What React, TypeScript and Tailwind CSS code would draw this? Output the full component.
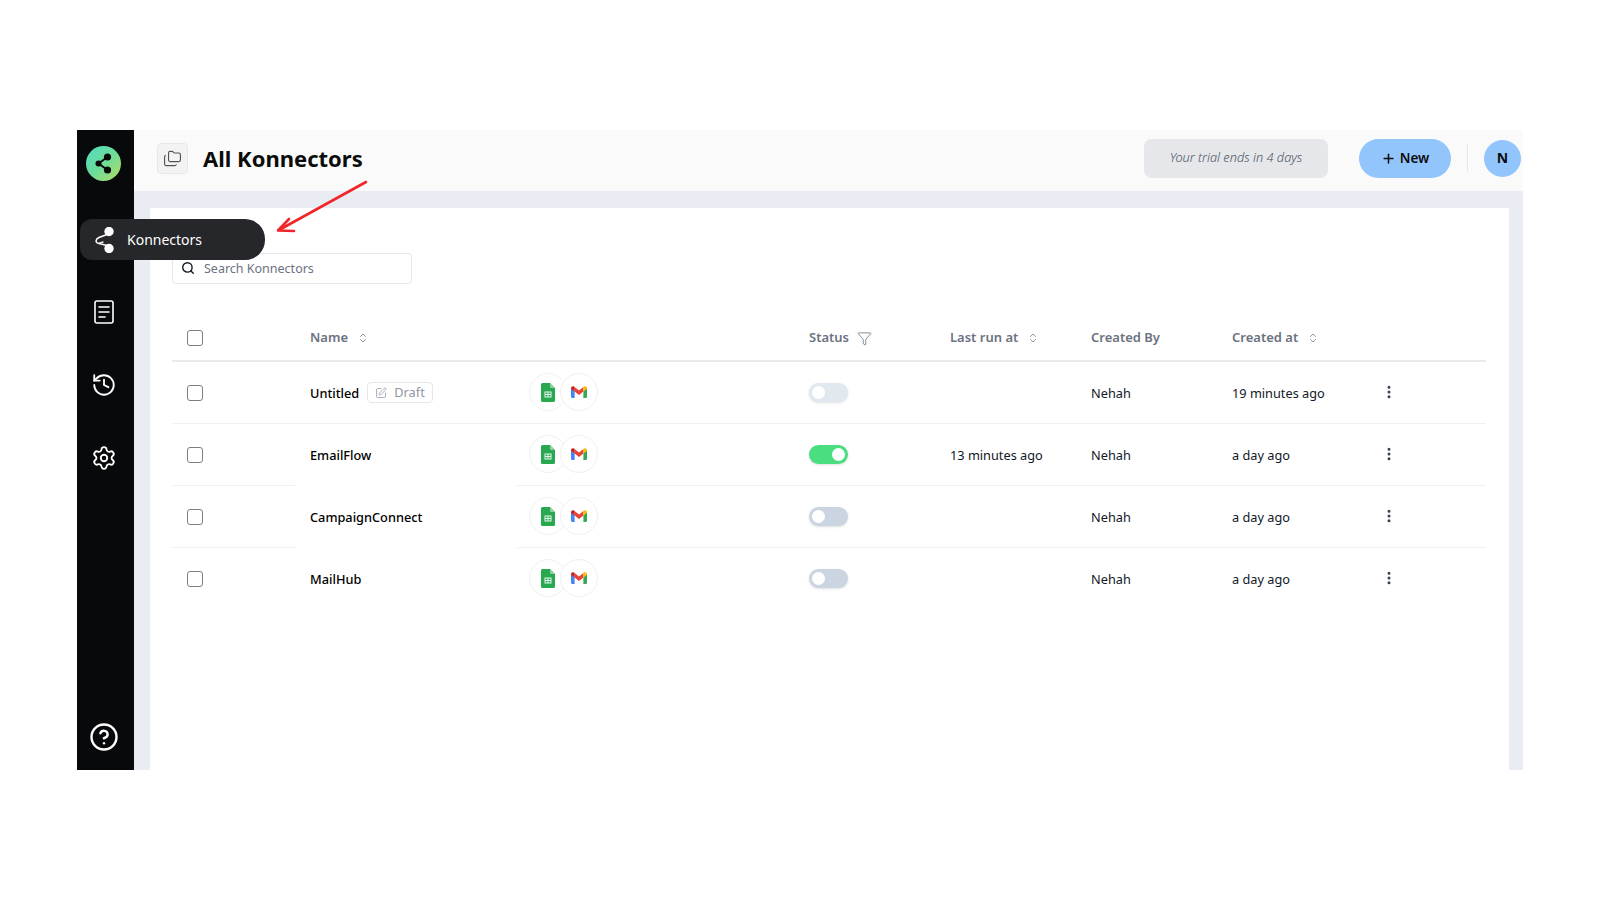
import { ChevronsUpDown, CircleHelp, EllipsisVertical, Funnel, Folders, History, Plus, Search, Settings, SquarePen } from 'lucide-react';

const rows = [
  { name: 'Untitled', draft: true, status: 'idle', lastRun: '', createdAt: '19 minutes ago' },
  { name: 'EmailFlow', status: 'on', lastRun: '13 minutes ago', createdAt: 'a day ago' },
  { name: 'CampaignConnect', status: 'off', lastRun: '', createdAt: 'a day ago', gap: true },
  { name: 'MailHub', status: 'off', lastRun: '', createdAt: 'a day ago', gap: true, last: true }
];

const gridCols = 'grid grid-cols-[123px_222px_292px_141px_141px_141px_254px]';

function SheetsIcon() {
  return (
    <svg width="14" height="19" viewBox="0 0 14 19">
      <path d="M1.5 0H9l5 5v12.5a1.5 1.5 0 0 1-1.5 1.5h-11A1.5 1.5 0 0 1 0 17.5v-16A1.5 1.5 0 0 1 1.5 0z" fill="#28a84f" />
      <path d="M9 0l5 5H10a1 1 0 0 1-1-1z" fill="#8ed1a5" />
      <path d="M3.5 8.5h7v6h-7z M4.5 9.5v1.5h2v-1.5z M7.5 9.5v1.5h2v-1.5z M4.5 12v1.5h2V12z M7.5 12v1.5h2V12z" fill="#e8f5ee" fillRule="evenodd" />
    </svg>
  );
}

function GmailIcon() {
  return (
    <svg width="16" height="12" viewBox="0 0 16 12">
      <path d="M0 2v8.8C0 11.5.5 12 1.2 12H3.6V5.2z" fill="#4285f4" />
      <path d="M12.4 12h2.4c.7 0 1.2-.5 1.2-1.2V2l-3.6 3.2z" fill="#34a853" />
      <path d="M3.6 5.6V1L8 4.4 12.4 1v4.6L8 9z" fill="#ea4335" />
      <path d="M0 2.2C0 .6 1.8-.4 3 .6l.6.5v4.5L0 2.8z" fill="#c5221f" />
      <path d="M12.4 1.1l.6-.5c1.2-1 3-.1 3 1.6v.6l-3.6 2.8z" fill="#fbbc04" />
    </svg>
  );
}

function Checkbox() {
  return <div className="w-4 h-4 rounded-[3px] border-[1.5px] border-[#7f7f7f] bg-white" />;
}

function Toggle({ status }: { status: string }) {
  if (status === 'on') {
    return (
      <div className="w-[39px] h-[19px] rounded-full bg-[#4ade80] flex items-center justify-end px-[3px] shadow-sm">
        <div className="w-[13px] h-[13px] rounded-full bg-white" />
      </div>
    );
  }
  return (
    <div className={`w-[39px] h-[19px] rounded-full flex items-center px-[3px] shadow-sm ${status === 'idle' ? 'bg-[#e2e8f0]' : 'bg-[#cbd5e1]'}`}>
      <div className="w-[13px] h-[13px] rounded-full bg-white" />
    </div>
  );
}

function SortHead({ label }: { label: string }) {
  return (
    <div className="flex items-center gap-[9px]">
      <span>{label}</span>
      <ChevronsUpDown size={12} strokeWidth={1.5} className="text-[#6b7280]" />
    </div>
  );
}

function Row({ row }: { row: (typeof rows)[number] }) {
  const line = row.last ? 'border-transparent' : 'border-[#eef0f4]';
  return (
    <div className={`${gridCols} h-[62px] items-stretch text-[12.75px] text-[#111827]`}>
      <div className={`flex items-center pl-[15px] border-b ${line}`}>
        <Checkbox />
      </div>
      <div className={`flex items-center pl-[15px] gap-2 border-b ${row.last || row.gap || row.name === 'EmailFlow' ? 'border-transparent' : line}`}>
        <span className="pt-[2px] font-medium text-black">{row.name}</span>
        {row.draft && (
          <span className="flex items-center gap-[7px] h-[21px] px-[7px] border border-[#e5e7eb] rounded text-[#8f96a3]">
            <SquarePen size={12} strokeWidth={1.5} />
            <span className="pt-[1px]">Draft</span>
          </span>
        )}
      </div>
      <div className={`flex items-center pl-3 pb-[1px] border-b ${line}`}>
        <div className="w-[38px] h-[38px] rounded-full border border-[#f0f0f0] bg-white flex items-center justify-center">
          <SheetsIcon />
        </div>
        <div className="w-[38px] h-[38px] -ml-[7px] rounded-full border border-[#f0f0f0] bg-white flex items-center justify-center">
          <GmailIcon />
        </div>
      </div>
      <div className={`flex items-center border-b ${line}`}>
        <Toggle status={row.status} />
      </div>
      <div className={`flex items-center pt-[2px] border-b ${line}`}>{row.lastRun}</div>
      <div className={`flex items-center pt-[2px] border-b ${line}`}>Nehah</div>
      <div className={`flex items-center border-b ${line}`}>
        <span className="w-[149px] pt-[2px]">{row.createdAt}</span>
        <EllipsisVertical size={16} strokeWidth={2.5} className="text-[#374151] -mt-[2px]" />
      </div>
    </div>
  );
}

export default function App() {
  return (
    <div className="relative w-[1600px] h-[900px] bg-white overflow-hidden font-['Noto_Sans',sans-serif]">
      <div className="pt-[130px] pl-[77px]">
        <div className="flex w-[1446px] h-[640px]">
          <aside className="w-[57px] bg-[#08090a] flex flex-col items-center text-white pt-4 pb-[18px] pr-1">
            <div className="w-[35px] h-[35px] rounded-full bg-gradient-to-br from-[#52dcc0] via-[#6bdc9a] to-[#b0dc58] flex items-center justify-center">
              <svg width="21" height="23" viewBox="0 0 21 23" fill="#08090a">
                <circle cx="14.5" cy="5" r="3.6" />
                <circle cx="14.5" cy="18" r="3.6" />
                <circle cx="5.5" cy="11.5" r="3" />
                <path d="M5.5 11.5L14.5 5M5.5 11.5L14.5 18" stroke="#08090a" strokeWidth="2" />
              </svg>
            </div>
            <svg className="mt-[119px]" width="20" height="24" viewBox="0 0 20 24" fill="none" stroke="white" strokeWidth="1.6" strokeLinecap="round" strokeLinejoin="round">
              <rect x="1" y="1" width="18" height="22" rx="2" />
              <path d="M5 7h10M5 12h10M5 17h6" />
            </svg>
            <History size={26} strokeWidth={1.7} className="mt-[48px]" />
            <Settings size={26} strokeWidth={1.7} className="mt-[47px]" />
            <CircleHelp size={30} strokeWidth={1.9} className="mt-auto" />
          </aside>

          <main className="flex-1 flex flex-col bg-[#e9edf3] min-w-0">
            <header className="h-[61px] bg-[#fafafa] flex items-center pl-[23px] pb-[5px] shrink-0">
              <div className="w-[31px] h-[31px] bg-[#f3f3f3] border border-[#e8e8e8] rounded flex items-center justify-center">
                <Folders size={19} strokeWidth={1.4} className="text-[#525252]" />
              </div>
              <h1 className="ml-[15px] text-[22px] font-bold text-[#0b0b0b]">All Konnectors</h1>
              <div className="ml-auto w-[184px] h-[39px] bg-[#e5e7eb] rounded-lg flex items-center justify-center text-[12.75px] italic font-light text-[#4b5563]">
                Your trial ends in 4 days
              </div>
              <button className="ml-[31px] w-[92px] h-[39px] rounded-full bg-[#93c5fd] flex items-center justify-center gap-1 text-[13.5px] font-semibold text-[#0b0b0b]">
                <Plus size={15} strokeWidth={2.4} />
                New
              </button>
              <div className="ml-4 w-px h-[28px] bg-[#e5e7eb]" />
              <div className="ml-4 w-[37px] h-[37px] rounded-full bg-[#93c5fd] flex items-center justify-center text-sm font-bold text-[#0b0b0b]">
                N
              </div>
              <div className="w-[2px]" />
            </header>

            <div className="flex-1 min-h-0 pt-[17px] pl-4 pr-[14px]">
              <section className="h-full bg-white pl-[22px] pr-[23px] pt-[45px]">
                <div className="w-[240px] h-[31px] border border-[#e2e8f0] rounded flex items-center pl-[9px] pt-[2px] gap-[9px] text-[12.5px] text-[#6b7280]">
                  <Search size={14} strokeWidth={2.4} className="text-[#111827] -ml-[1px] -mt-[3px]" />
                  Search Konnectors
                </div>

                <div className={`${gridCols} mt-[31px] h-[47px] items-center border-b-2 border-[#e8eaee] text-[13px] font-semibold text-[#6b7280]`}>
                  <div className="pl-[15px]">
                    <Checkbox />
                  </div>
                  <div className="pl-[15px] pt-[1px]">
                    <SortHead label="Name" />
                  </div>
                  <div />
                  <div className="flex items-center gap-2 pt-[1px]">
                    Status
                    <Funnel size={15} strokeWidth={1.3} />
                  </div>
                  <div className="pt-[1px]">
                    <SortHead label="Last run at" />
                  </div>
                  <div className="pt-[1px]">Created By</div>
                  <div className="pt-[1px]">
                    <SortHead label="Created at" />
                  </div>
                </div>

                {rows.map((row) => (
                  <Row key={row.name} row={row} />
                ))}
              </section>
            </div>
          </main>
        </div>
      </div>

      {/* tooltip for the hovered nav item */}
      <div className="absolute left-[80px] top-[219px] w-[185px] h-[41px] bg-[#26272a] rounded-l-xl rounded-r-[20px] flex items-center pl-[14px] gap-[13px] text-sm text-white">
        <svg width="20" height="26" viewBox="0 0 20 26" fill="none" stroke="white" strokeWidth="1.4">
          <circle cx="15" cy="4.5" r="4" fill="white" />
          <circle cx="15" cy="21.5" r="4" fill="white" />
          <path d="M13 7.5L5 10.5C1 12.5 1 15.5 5 16.5L13 18.5M5 16.5C7 15.5 8 15 9.5 15" />
        </svg>
        Konnectors
      </div>

      {/* red annotation arrow */}
      <svg className="absolute left-[270px] top-[175px]" width="105" height="65" viewBox="0 0 105 65" fill="none" stroke="#f0262b" strokeWidth="2.6" strokeLinecap="round" strokeLinejoin="round">
        <path d="M96 7L9 55" />
        <path d="M19 44L8 55.5L24 56" />
      </svg>
    </div>
  );
}
